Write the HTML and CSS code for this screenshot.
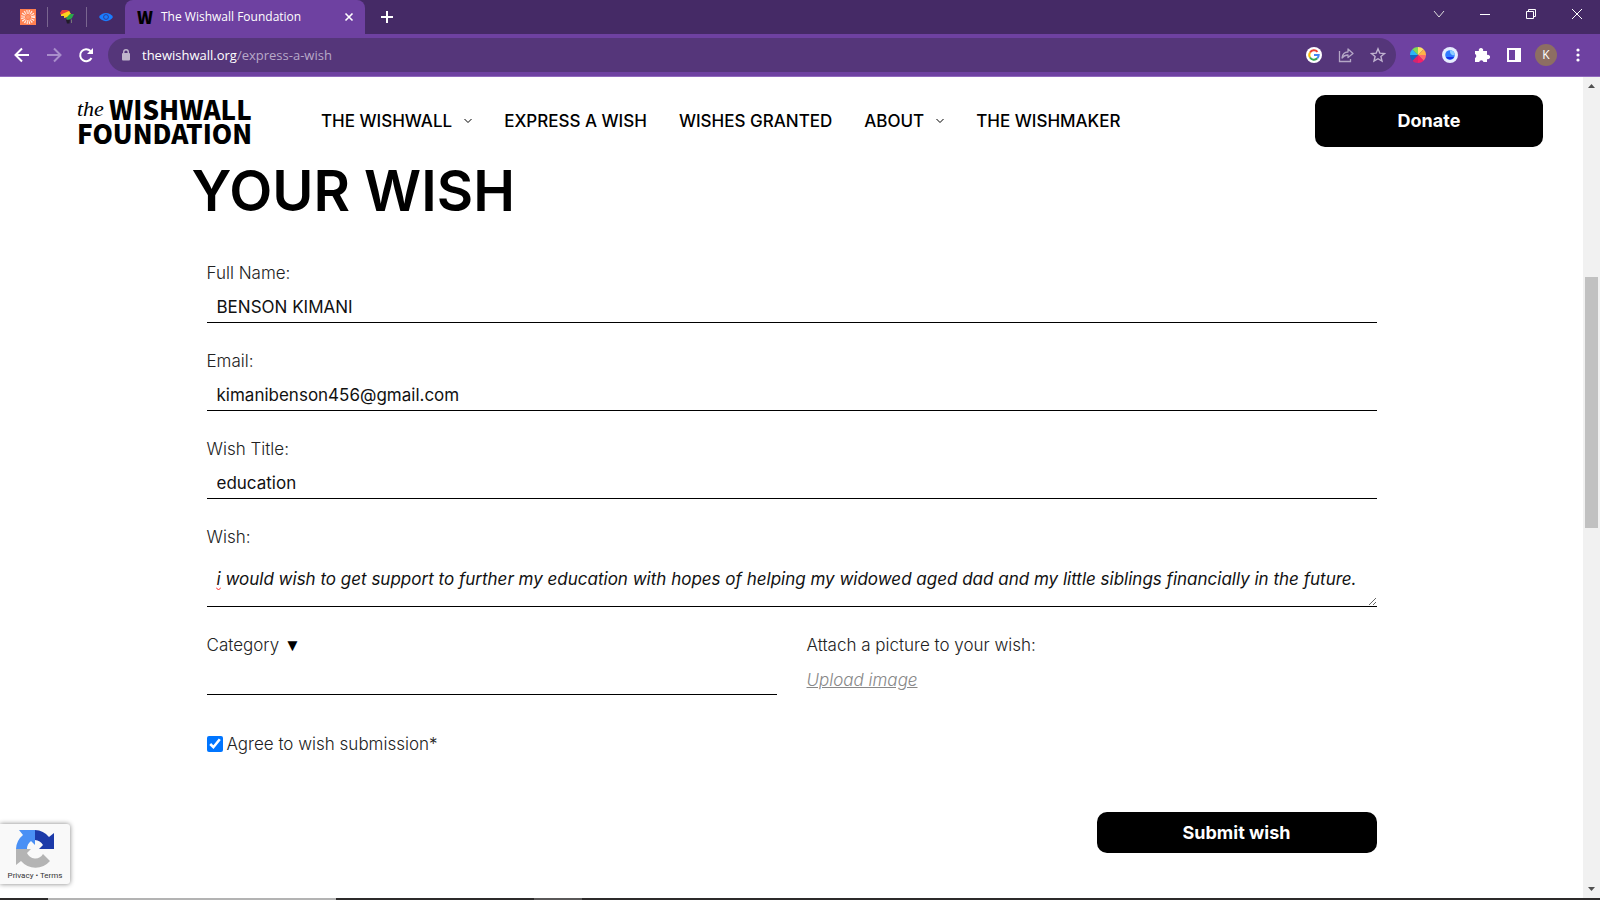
FILE: index.html
```
<!DOCTYPE html>
<html lang="en">
<head>
<meta charset="utf-8">
<meta name="viewport" content="width=device-width, initial-scale=1.0">
<title>The Wishwall Foundation</title>
<link rel="stylesheet" href="styles.css">
</head>
<body>
<!-- tab strip -->
<div class="tabs">
	<div class="pinned">
		<button class="pin" aria-label="Sunburst">
			<svg width="16" height="16" viewBox="0 0 16 16"><rect width="16" height="16" fill="#ff7f50"/><circle cx="8" cy="8" r="5" fill="none" stroke="#fff" stroke-width="4" stroke-dasharray="1 .96" opacity=".85"/><circle cx="8" cy="8" r="2" fill="#ff9a70"/></svg>
		</button>
		<button class="pin" aria-label="Africa">
			<svg width="16" height="16" viewBox="0 0 16 16"><path d="M1 4l2-3h5l3 1-1 2-8 2z" fill="#e8413c"/><path d="M2 5.500L10 2l2 3-3 3-4 1V7H2z" fill="#fdd31d"/><path d="M7 9l4-4 4 0-2 4-4 3z" fill="#2ba84a"/><path d="M7 11l4-.5-.5 4H8z" fill="#211c28"/><path d="M12 11l1-1v4h-1z" fill="#777"/></svg>
		</button>
		<button class="pin" aria-label="Eye">
			<svg width="16" height="16" viewBox="0 0 16 16"><path d="M1 8c3-5.500 11-5.500 14 0-3 5.500-11 5.500-14 0z" fill="#1a7cff"/><circle cx="8" cy="8" r="2.400" fill="#1a7cff" stroke="#2f3f96"/></svg>
		</button>
	</div>
	<div class="tab">
		<span class="tab-icon">W</span>
		<span class="tab-title">The Wishwall Foundation</span>
		<button class="tab-close" aria-label="Close tab"><svg width="10" height="10" viewBox="0 0 10 10"><path d="M1.500 1.500l7 7M8.500 1.500l-7 7" stroke="#fff" stroke-width="1.600"/></svg></button>
	</div>
	<button class="new-tab" aria-label="New tab"><svg width="12" height="12" viewBox="0 0 12 12"><path d="M6 0v12M0 6h12" stroke="#fff" stroke-width="2"/></svg></button>
	<div class="window-buttons">
		<button aria-label="Search tabs"><svg width="12" height="12" viewBox="0 0 12 12"><path d="M1 3l5 6 5-6" fill="none" stroke="#ddd"/></svg></button>
		<button aria-label="Minimize"><svg width="12" height="12" viewBox="0 0 12 12"><path d="M1 6.500h10" stroke="#fff"/></svg></button>
		<button aria-label="Restore"><svg width="12" height="12" viewBox="0 0 12 12"><path d="M1.500 3.500h7v7h-7zM3.500 3.500v-2h7v7h-2" fill="none" stroke="#fff"/></svg></button>
		<button aria-label="Close"><svg width="12" height="12" viewBox="0 0 12 12"><path d="M1 1l10 10M11 1L1 11" stroke="#fff"/></svg></button>
	</div>
</div>

<!-- toolbar -->
<div class="toolbar">
	<button aria-label="Back"><svg width="16" height="16" viewBox="0 0 16 16"><path d="M15 8H2M8 1.500L1.500 8 8 14.500" fill="none" stroke="#fff" stroke-width="2"/></svg></button>
	<button aria-label="Forward"><svg width="16" height="16" viewBox="0 0 16 16"><path d="M1 8h13M8 1.500L14.500 8 8 14.500" fill="none" stroke="#a98dcb" stroke-width="2"/></svg></button>
	<button aria-label="Reload"><svg width="16" height="16" viewBox="0 0 16 16"><path d="M13.500 11A6 6 0 1 1 12.500 4" fill="none" stroke="#fff" stroke-width="2"/><path d="M15 1v6H9z" fill="#fff"/></svg></button>
	<div class="address">
		<svg width="10" height="12" viewBox="0 0 10 12"><rect x="1" y="4" width="8" height="7.500" rx="1" fill="#c0b6cc"/><path d="M2.700 5V3a2.300 2.300 0 0 1 4.600 0v2" fill="none" stroke="#c0b6cc" stroke-width="1.400"/></svg>
		<span class="url">thewishwall.org<span class="path">/express-a-wish</span></span>
		<button aria-label="Google"><svg width="16" height="16" viewBox="0 0 16 16"><circle cx="8" cy="8" r="8" fill="#fff"/><g fill="none" stroke-width="2"><path d="M4 5.500A4.700 4.700 0 0 1 11.500 4.800" stroke="#ea4335"/><path d="M4 5.500a4.700 4.700 0 0 0 0 5" stroke="#fbbc05"/><path d="M4 10.500a4.700 4.700 0 0 0 7.300.8" stroke="#34a853"/><path d="M11.300 11.300A4.700 4.700 0 0 0 12.700 8H8" stroke="#4285f4"/></g></svg></button>
		<button aria-label="Share"><svg width="16" height="16" viewBox="0 0 16 16"><path d="M1.500 4v10.500h11V12" fill="none" stroke="#b4a6c6" stroke-width="1.300"/><path d="M4 11c.5-4 3-6 6-6V2l5 4.500-5 4V8c-3 0-4.500 1-6 3z" fill="none" stroke="#b4a6c6" stroke-width="1.300" stroke-linejoin="round"/></svg></button>
		<button aria-label="Bookmark"><svg width="16" height="16" viewBox="0 0 16 16"><path d="M8 1.800l1.800 4.300 4.700.4-3.600 3 1.100 4.600L8 11.700l-4 2.400 1.100-4.600-3.600-3 4.700-.4z" fill="none" stroke="#c0b3d0" stroke-width="1.400"/></svg></button>
	</div>
	<div class="extensions">
		<button aria-label="Color picker"><svg width="16" height="16" viewBox="0 0 16 16"><path d="M8 8V0a8 8 0 0 1 5.700 2.300z" fill="#ffe066"/><path d="M8 8l5.700-5.700A8 8 0 0 1 16 8z" fill="#ffb347"/><path d="M8 8h8a8 8 0 0 1-2.300 5.700z" fill="#ff6b6b"/><path d="M8 8l5.700 5.700A8 8 0 0 1 8 16z" fill="#f72067"/><path d="M8 8v8a8 8 0 0 1-5.700-2.300z" fill="#d6246e"/><path d="M8 8l-5.700 5.700A8 8 0 0 1 0 8z" fill="#1565c0"/><path d="M8 8H0a8 8 0 0 1 2.300-5.700z" fill="#29b6f6"/><path d="M8 8L2.300 2.300A8 8 0 0 1 8 0z" fill="#7ed957"/></svg></button>
		<button aria-label="Ring"><svg width="16" height="16" viewBox="0 0 16 16"><circle cx="8" cy="8" r="8" fill="#e6edff"/><circle cx="8" cy="8" r="4.800" fill="#2f7cff"/><path d="M3.800 10a4.800 4.800 0 0 0 8.400 0z" fill="#1730e8"/><path d="M8 3.200A4.800 4.800 0 0 1 12.800 8 3.500 3.500 0 0 1 8 5z" fill="#8accff"/></svg></button>
		<button aria-label="Extensions"><svg width="16" height="16" viewBox="0 0 16 16"><path d="M1 4h4a2.200 2.200 0 1 1 4 0h4v4a2.200 2.200 0 1 1 0 4v3H9.500a2.200 2.200 0 0 0-4.300 0H1v-4a2.200 2.200 0 0 0 0-4z" fill="#fff"/></svg></button>
		<button aria-label="Side panel"><svg width="16" height="16" viewBox="0 0 16 16"><path d="M1 1h14v14H1zM3 3v10h6V3z" fill="#fff" fill-rule="evenodd"/></svg></button>
		<button class="avatar" aria-label="Profile">K</button>
		<button aria-label="Menu"><svg width="16" height="16" viewBox="0 0 16 16"><g fill="#fff"><circle cx="8" cy="3" r="1.600"/><circle cx="8" cy="8" r="1.600"/><circle cx="8" cy="13" r="1.600"/></g></svg></button>
	</div>
</div>

<!-- page -->
<div class="viewport">
	<div class="page">
		<header class="header">
			<a class="logo" href="#"><span class="logo-top"><i>the</i>WISHWALL</span><span>FOUNDATION</span></a>
			<nav class="nav">
				<a href="#">THE WISHWALL <svg width="8" height="6" viewBox="0 0 8 6"><path d="M.5 1L4 4.500 7.500 1" fill="none" stroke="#000"/></svg></a>
				<a href="#">EXPRESS A WISH</a>
				<a href="#">WISHES GRANTED</a>
				<a href="#">ABOUT <svg width="8" height="6" viewBox="0 0 8 6"><path d="M.5 1L4 4.500 7.500 1" fill="none" stroke="#000"/></svg></a>
				<a href="#">THE WISHMAKER</a>
			</nav>
			<button class="btn donate">Donate</button>
		</header>

		<main class="container">
			<h1>YOUR WISH</h1>
			<form class="form">
				<div class="field">
					<label for="name">Full Name:</label>
					<input type="text" id="name" value="BENSON KIMANI">
				</div>
				<div class="field">
					<label for="email">Email:</label>
					<input type="email" id="email" value="kimanibenson456@gmail.com">
				</div>
				<div class="field">
					<label for="title">Wish Title:</label>
					<input type="text" id="title" value="education">
				</div>
				<div class="field wish">
					<label for="wish">Wish:</label>
					<textarea id="wish" rows="1" spellcheck="false">i would wish to get support to further my education with hopes of helping my widowed aged dad and my little siblings financially in the future.</textarea>
					<svg class="squiggle" width="5" height="4" viewBox="0 0 5 4"><path d="M0 .5L2.500 3 5 .5" fill="none" stroke="#f22"/></svg>
				</div>
				<div class="row">
					<div class="field">
						<label for="category">Category <span class="arrow">▼</span></label>
						<select id="category"><option></option></select>
					</div>
					<div class="field">
						<span>Attach a picture to your wish:</span>
						<a class="upload" href="#">Upload image</a>
					</div>
				</div>
				<div class="agree">
					<input type="checkbox" id="agree" checked>
					<label for="agree">Agree to wish submission*</label>
				</div>
				<button type="button" class="btn submit">Submit wish</button>
			</form>
		</main>

		<div class="recaptcha">
			<svg width="40" height="40" viewBox="0 0 40 40">
				<path d="M20 1v15l-4-4a10 10 0 0 0-4 8H1A19 19 0 0 1 8 6L4 1z" fill="#4a90f5"/>
				<path d="M20 1a19 19 0 0 1 14 7l5-4v16H24l4-4a10 10 0 0 0-8-5z" fill="#1c3aa9"/>
				<path d="M1 20h15l-4 4a9 9 0 0 0 16 1l7 7A19 19 0 0 1 6 32l-5 4z" fill="#b4b4b4"/>
			</svg>
			<div class="links"><a href="#">Privacy</a> • <a href="#">Terms</a></div>
		</div>
	</div>
	<div class="scrollbar">
		<svg width="17" height="17" viewBox="0 0 17 17"><path d="M5 11h7L8.500 7z" fill="#505050"/></svg>
		<div class="track"><div class="thumb"></div></div>
		<svg width="17" height="17" viewBox="0 0 17 17"><path d="M5 6h7l-3.500 4z" fill="#505050"/></svg>
	</div>
</div>
<div class="taskbar"><div class="search"></div><div class="active"></div></div>
</body>
</html>
```
FILE: styles.css
```
* {
	box-sizing: border-box;
}

body {
	margin: 0;
	height: 100vh;
	display: flex;
	flex-direction: column;
	overflow: hidden;
	background: #fff;
	color: #000;
	font: 300 17px/24px Inter, "Open Sans", sans-serif;
}

button {
	border: 0;
	padding: 0;
	background: none;
	font: inherit;
	color: inherit;
}

a {
	color: inherit;
	text-decoration: none;
}

svg {
	display: block;
	flex: none;
}

/* browser */
.tabs {
	height: 34px;
	display: flex;
	align-items: stretch;
	background: #452a66;
	color: #fff;
	font: 12px/34px "Open Sans", sans-serif;
}

.pinned {
	display: flex;
	align-items: center;
	padding-left: 8px;
}

.pin {
	width: 39px;
	height: 20px;
	display: flex;
	justify-content: center;
	align-items: center;
}

.pin + .pin {
	border-left: 1px solid #7a6690;
}

.tab {
	width: 240px;
	display: flex;
	align-items: center;
	padding: 0 11px 0 12px;
	background: #6e41a1;
	border-radius: 8px 8px 0 0;
}

.tab-icon {
	width: 24px;
	color: #000;
	font: 900 17px/34px "Noto Sans CJK SC", sans-serif;
}

.tab-title {
	flex: 1;
}

.new-tab {
	padding: 0 16px;
}

.window-buttons {
	display: flex;
	margin-left: auto;
}

.window-buttons button {
	width: 46px;
	height: 28px;
	display: flex;
	justify-content: center;
	align-items: center;
}

.toolbar {
	height: 43px;
	display: flex;
	align-items: center;
	gap: 16px;
	padding: 0 14px;
	background: #6e41a1;
	border-bottom: 1px solid #9069bd;
	color: #fff;
}

.address {
	flex: 1;
	height: 34px;
	display: flex;
	align-items: center;
	gap: 16px;
	margin-left: -2px;
	padding: 0 10px 0 13px;
	border-radius: 17px;
	background: #55367a;
}

.url {
	flex: 1;
	margin-left: -5px;
	font: 13px/34px "Open Sans", sans-serif;
}

.path {
	color: #b8a9c9;
}

.extensions {
	display: flex;
	align-items: center;
	gap: 16px;
	margin-left: -2px;
}

.avatar {
	width: 22px;
	height: 22px;
	margin: 0 -3px;
	border-radius: 50%;
	background: #8d6e63;
	font: 12px/22px "Open Sans", sans-serif;
}

.viewport {
	flex: 1;
	min-height: 0;
	display: flex;
}

.page {
	flex: 1;
	min-width: 0;
	position: relative;
}

/* header */
.header {
	display: flex;
	align-items: center;
	padding: 18px 40px 0 77px;
}

.logo {
	display: flex;
	flex-direction: column;
	width: 244px;
	font: 900 26px/24px "Noto Sans CJK SC", "Liberation Sans", sans-serif;
}

.logo-top {
	display: flex;
}

.logo i {
	width: 32px;
	font: italic 22px/24px "Liberation Serif", serif;
}

.nav {
	display: flex;
	gap: 32px;
	font-weight: 500;
}

.nav a {
	display: flex;
	align-items: center;
	gap: 12px;
}

.btn {
	background: #000;
	color: #fff;
	border-radius: 10px;
	font-size: 18px;
	font-weight: 700;
}

.donate {
	width: 228px;
	height: 52px;
	margin-left: auto;
}

/* form */
.container {
	max-width: 1200px;
	margin: 0 auto;
}

h1 {
	margin: 20px 0 46px;
	font-size: 56px;
	font-weight: 600;
	line-height: 48px;
}

.form {
	display: flex;
	flex-direction: column;
	gap: 26px;
	padding: 0 15px;
	color: #222;
}

.field {
	flex: 1;
	position: relative;
	display: flex;
	flex-direction: column;
	gap: 8px;
}

.field input,
.field select,
.field textarea {
	width: 100%;
	height: 30px;
	padding: 0 10px 1px;
	border: 0;
	border-bottom: 1px solid #000;
	border-radius: 0;
	outline: 0;
	background: none;
	color: #111;
	font: inherit;
	font-weight: 400;
	appearance: none;
}

.field textarea {
	height: 50px;
	padding: 10px 10px 15px;
	font-style: italic;
	overflow: hidden;
}

.squiggle {
	position: absolute;
	left: 9px;
	bottom: 16px;
}

.arrow {
	color: #000;
	font-family: "DejaVu Sans", sans-serif;
	line-height: 1;
}

.row {
	display: flex;
	gap: 30px;
}

.upload {
	align-self: flex-start;
	color: #888;
	font-style: italic;
	line-height: 30px;
	text-decoration: underline;
}

.agree {
	display: flex;
	align-items: center;
	gap: 4px;
	margin: 11px 0 30px;
}

.agree input {
	width: 16px;
	height: 16px;
	margin: 0;
	accent-color: #0075ff;
}

.submit {
	align-self: flex-end;
	width: 280px;
	height: 41px;
}

.recaptcha {
	position: absolute;
	left: 0;
	bottom: 14px;
	width: 70px;
	height: 60px;
	padding-top: 5px;
	display: flex;
	flex-direction: column;
	align-items: center;
	background: #f9f9f9;
	border-radius: 0 3px 3px 0;
	box-shadow: 0 0 5px #808080;
}

.links {
	color: #333;
	font: 8px/14px Roboto, sans-serif;
}

/* scrollbar */
.scrollbar {
	width: 17px;
	display: flex;
	flex-direction: column;
	background: #f1f1f1;
}

.track {
	flex: 1;
	padding: 183px 2px 0;
}

.thumb {
	height: 251px;
	background: #c1c1c1;
}

.taskbar {
	height: 2px;
	display: flex;
	gap: 198px;
	padding-left: 48px;
	background: #2d2b2b;
}

.search {
	width: 288px;
	background: #b3b3b3;
}

.active {
	width: 48px;
	background: #5a5858;
}
```
